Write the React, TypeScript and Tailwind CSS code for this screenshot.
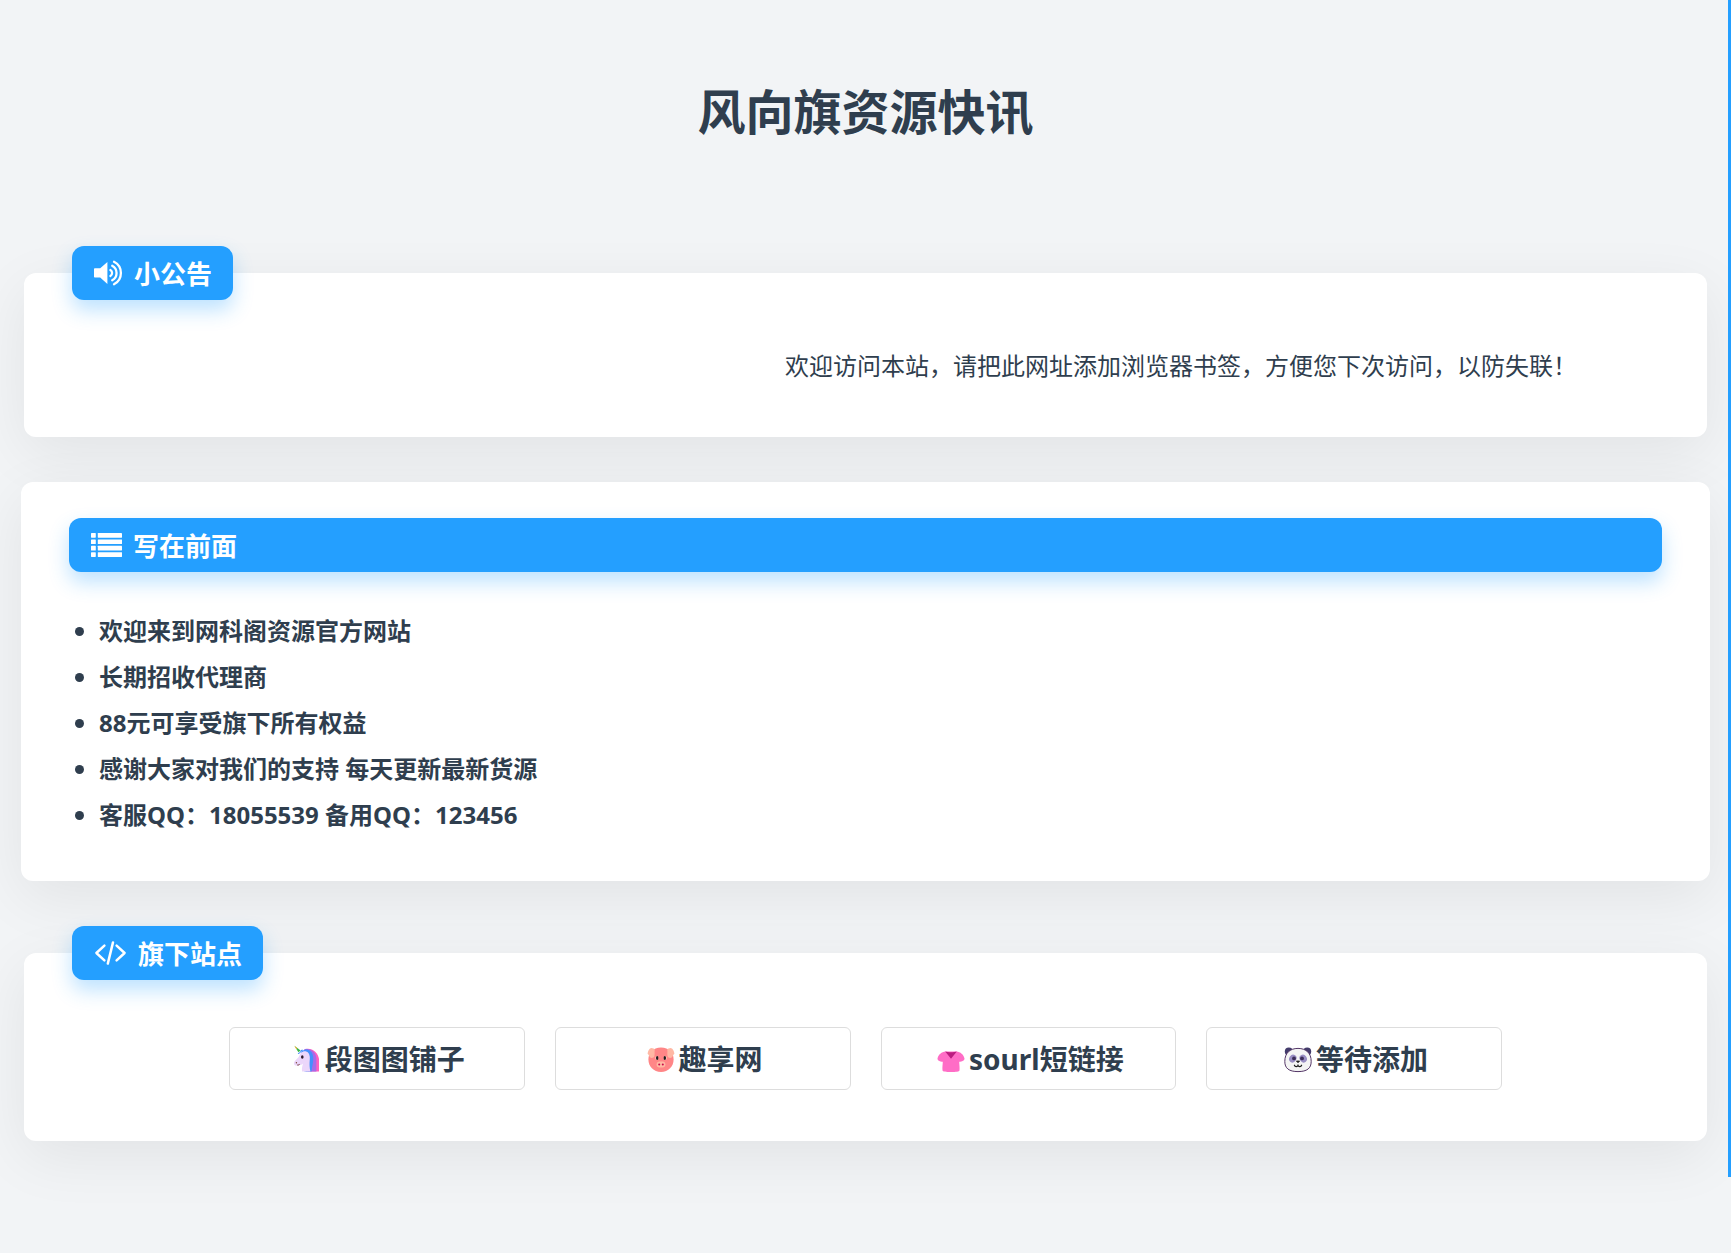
import type { ReactNode } from "react";
import { clsx } from "clsx";

const NOTICE = "欢迎访问本站，请把此网址添加浏览器书签，方便您下次访问，以防失联！";

const INTRO = [
  "欢迎来到网科阁资源官方网站",
  "长期招收代理商",
  "88元可享受旗下所有权益",
  "感谢大家对我们的支持 每天更新最新货源",
  "客服QQ：18055539 备用QQ：123456",
];

function VolumeIcon() {
  return (
    <svg viewBox="0 0 29 26" className="h-[26px] w-[29px]" fill="none" aria-hidden="true">
      <path d="M0.8 8.2h5.4L13.4 2v22L6.2 17.600H0.8a.8.8 0 0 1-.8-.8V9a.8.8 0 0 1 .8-.8z" fill="currentColor" />
      <g stroke="currentColor" strokeWidth="2.3" strokeLinecap="round">
        <path d="M16.400 10a3.500 3.500 0 0 1 0 6" />
        <path d="M18.200 5.700a8.300 8.300 0 0 1 0 14.600" />
        <path d="M20 1.700a12.700 12.700 0 0 1 0 22.600" />
      </g>
    </svg>
  );
}

function ListIcon() {
  return (
    <svg viewBox="0 0 31 24" className="h-6 w-[31px]" fill="currentColor" aria-hidden="true">
      {[0, 6.4, 12.8, 19.2].map((y) => (
        <g key={y}>
          <rect x="0" y={y} width="4.8" height="4.7" rx="0.6" />
          <rect x="6.8" y={y} width="24.2" height="4.7" rx="0.4" />
        </g>
      ))}
    </svg>
  );
}

function CodeIcon() {
  return (
    <svg
      viewBox="0 0 33 26"
      className="h-[26px] w-[33px]"
      fill="none"
      stroke="currentColor"
      strokeWidth="2.5"
      strokeLinecap="round"
      strokeLinejoin="round"
      aria-hidden="true"
    >
      <path d="M10.4 5.6 2.4 13l8 7.4" />
      <path d="M22.6 5.6l8 7.4-8 7.4" />
      <path d="M19 2.4 13.8 23.6" />
    </svg>
  );
}

function UnicornIcon() {
  return (
    <svg viewBox="0 0 28 28" className="size-7" aria-hidden="true">
      <path d="M12 4c7-1.6 13 3.2 14 10v12.6H15z" fill="#ff5fc0" />
      <path d="M11 4.400c7-2 12 3 12.400 9V26.600H13z" fill="#a56be8" />
      <path d="M8 7c4-4.500 11-3 12 4 .7 5-.5 9-1.500 15.600h-7z" fill="#458ffc" />
      <path d="M7.800 7.800c4-3.400 8.600-1.400 9 4 .3 4.200-1 6.600.6 14.800H9c-.4-3.800.6-6.600 1-8.200-2.200 2.300-4.800 1.700-6.400 2.200C1.400 21 .4 18.800 1.200 17c1-2 4.200-3.600 5.200-6.400z" fill="#ebd6fa" />
      <path d="M4.800 9c2.600.2 2.600-2.800 5.600-3.800C9.200 4.400 8 5 7.400 6.200 6.400 8 5 7.600 4.800 9z" fill="#458ffc" />
      <path d="M1.400.8 7.600 5.600l-2.200 1.600z" fill="#3ab54a" />
      <path d="M1.400.8 4.400 3.200l-1.200.9z" fill="#ffb02e" />
      <ellipse cx="9.300" cy="12" rx="1.300" ry="1.700" fill="#2b1b2b" />
      <circle cx="3.400" cy="17.800" r=".7" fill="#7d4533" />
      <path d="M4.200 20c1.400.2 2-.2 2.600-1" stroke="#6b3030" strokeWidth=".9" fill="none" />
    </svg>
  );
}

function PigIcon() {
  return (
    <svg viewBox="0 0 28 28" className="size-7" aria-hidden="true">
      <path d="M14 2.600c8 0 12.600 5 12.600 12S21.400 27 14 27 1.400 21.600 1.400 14.600 6 2.600 14 2.600z" fill="#ff8687" />
      <path d="M4.200 3c1.800 0 3.200.8 3.600 1.400-.6 2.800.4 5-.6 7.400-.8 1.400-3.400 1.400-4.400.2C2 10.800 1.800 9.600.6 8.800.8 6.600 2 3.600 4.200 3z" fill="#ffb8a4" />
      <path d="M23.800 3c-1.800 0-3.200.8-3.600 1.400.6 2.800-.4 5 .6 7.400.8 1.400 3.400 1.400 4.400.2.800-1.200 1-2.400 2.200-3.200-.2-2.200-1.400-5.200-3.600-5.800z" fill="#ffb8a4" />
      <ellipse cx="9.800" cy="13" rx="1.600" ry="2" fill="#ffc9bf" />
      <ellipse cx="18.200" cy="13" rx="1.600" ry="2" fill="#ffc9bf" />
      <ellipse cx="10.200" cy="13" rx="1.200" ry="1.900" fill="#1c1c1c" />
      <ellipse cx="17.800" cy="13" rx="1.200" ry="1.900" fill="#1c1c1c" />
      <rect x="9.600" y="16.400" width="8.800" height="6" rx="3" fill="#ffb8a4" />
      <circle cx="12.200" cy="19.400" r="1" fill="#ca0b4a" />
      <circle cx="15.800" cy="19.400" r="1" fill="#ca0b4a" />
    </svg>
  );
}

function BlouseIcon() {
  return (
    <svg viewBox="0 0 28 28" className="size-7" aria-hidden="true">
      <path d="M8.500 6.600h11c4 .6 7 2.800 8 7 .2 2-2.500 3.200-5.300 3.200.1 3 .6 5.400.3 8.700-.2 1-3.500 1.500-8.500 1.500s-8.300-.5-8.500-1.500c-.3-3.300.2-5.700.3-8.700-2.800 0-5.500-1.200-5.300-3.200 1-4.200 4-6.400 8-7z" fill="#ff6dc6" />
      <path d="M8.200 6.600c3 1 8.600 1 11.600 0L14 13.800z" fill="#bb1d80" />
    </svg>
  );
}

function PandaIcon() {
  return (
    <svg viewBox="0 0 28 28" className="size-7" aria-hidden="true">
      <circle cx="4.800" cy="6.400" r="4" fill="#433b6b" />
      <circle cx="23.200" cy="6.400" r="4" fill="#433b6b" />
      <path d="M14 3.400c8 0 13.200 4.600 13.200 13 0 7-4.200 10.200-13.200 10.200S.8 23.400.8 16.400c0-8.400 5.200-13 13.200-13z" fill="#f4f4f4" stroke="#533566" strokeWidth="1" />
      <ellipse cx="8.800" cy="13.600" rx="3.500" ry="4" fill="#998ec4" transform="rotate(35 8.800 13.600)" />
      <ellipse cx="19.200" cy="13.600" rx="3.500" ry="4" fill="#998ec4" transform="rotate(-35 19.200 13.600)" />
      <circle cx="10" cy="13.400" r="1.900" fill="#3b2d57" />
      <circle cx="18" cy="13.400" r="1.900" fill="#3b2d57" />
      <path d="M12.400 16h3.200L14 17.800z" fill="#1c1c1c" stroke="#1c1c1c" strokeWidth=".8" strokeLinejoin="round" />
      <path d="M10.400 20.200c.6 1.800 3 1.800 3.600.2.600 1.600 3 1.600 3.600-.2" fill="none" stroke="#1c1c1c" strokeWidth="1.200" strokeLinecap="round" />
    </svg>
  );
}

const SITES = [
  { name: "段图图铺子", icon: <UnicornIcon /> },
  { name: "趣享网", icon: <PigIcon /> },
  { name: "sourl短链接", icon: <BlouseIcon /> },
  { name: "等待添加", icon: <PandaIcon /> },
];

function SectionTitle({ icon, children, className }: { icon: ReactNode; children: ReactNode; className?: string }) {
  return (
    <h2
      className={clsx(
        "flex h-[54px] items-center gap-[11px] rounded-xl bg-[#249fff] pr-[21px] pl-[22px] text-[26px] font-bold text-white shadow-[0_10px_20px_rgba(36,159,255,0.3)]",
        className
      )}
    >
      {icon}
      <span className="pt-0.5">{children}</span>
    </h2>
  );
}

function Card({ children, className }: { children: ReactNode; className?: string }) {
  return (
    <section className={clsx("flex flex-col rounded-xl bg-white px-12 shadow-[0_16px_60px_rgba(0,20,20,0.07)]", className)}>
      {children}
    </section>
  );
}

export default function App() {
  return (
    <div className="min-h-screen bg-[#f2f4f6] font-['Noto_Sans','Noto_Sans_CJK_SC',sans-serif] text-[#2f3e4e]">
      {/* Scroll progress */}
      <div className="fixed top-0 right-0 h-[93.9%] w-[3px] bg-[#249fff]" />

      <header className="pt-20 pb-[129px] text-center">
        <h1 className="text-5xl leading-[64px] font-bold">风向旗资源快讯</h1>
      </header>

      <main className="flex flex-col px-[21px] pb-28">
        <Card className="mx-[3px] items-start pb-[53px]">
          <SectionTitle icon={<VolumeIcon />} className="-mt-[27px]">
            小公告
          </SectionTitle>
          <div className="mt-12 flex w-full justify-end overflow-hidden pr-[82px]">
            <p className="text-2xl leading-9 whitespace-nowrap">{NOTICE}</p>
          </div>
        </Card>

        <Card className="mt-[45px] pt-9 pb-[43px]">
          <SectionTitle icon={<ListIcon />}>写在前面</SectionTitle>
          <ul className="mt-9 list-disc pl-[30px] text-2xl leading-[46px] font-bold">
            {INTRO.map((line) => (
              <li key={line}>{line}</li>
            ))}
          </ul>
        </Card>

        <Card className="mx-[3px] mt-[72px] items-start pb-[51px]">
          <SectionTitle icon={<CodeIcon />} className="-mt-[27px]">
            旗下站点
          </SectionTitle>
          <nav className="mx-auto mt-[47px] grid w-full max-w-[1273px] grid-cols-4 gap-[30px]">
            {SITES.map((site) => (
              <a
                key={site.name}
                href="#"
                className="flex h-[63px] items-center justify-center gap-1 rounded-md border border-[#dddddd] pl-1 text-[28px] font-bold hover:border-[#249fff]"
              >
                {site.icon}
                <span>{site.name}</span>
              </a>
            ))}
          </nav>
        </Card>
      </main>
    </div>
  );
}
